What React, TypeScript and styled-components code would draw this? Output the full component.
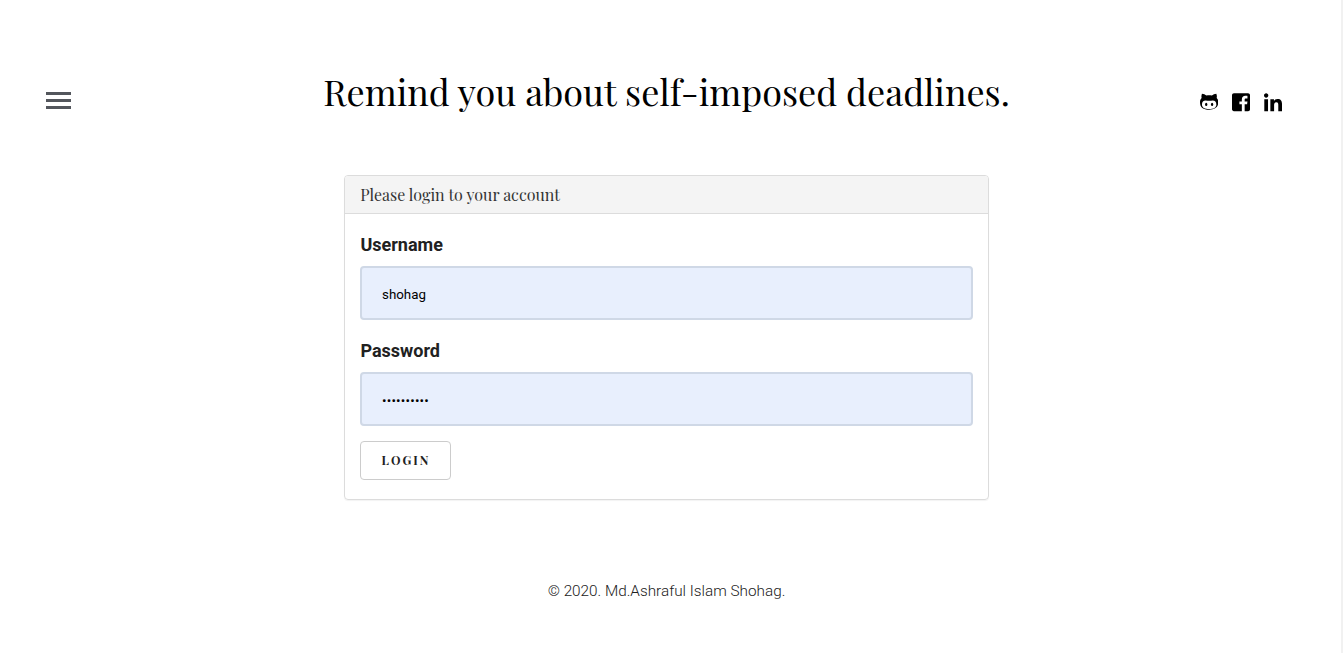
import React from "react";
import styled, { createGlobalStyle } from "styled-components";

const serif = '"Playfair Display", "Liberation Serif", serif';

const GlobalStyle = createGlobalStyle`
  *, *::before, *::after { box-sizing: border-box; }
  body {
    margin: 0;
    background: #fff;
    color: #212529;
    font-family: Roboto, "Liberation Sans", sans-serif;
    overflow: hidden;
  }
`;

const Page = styled.div`
  height: 653px;
  padding-right: 8px;
  border-right: 2px solid #f1f1f1;
  display: flex;
  flex-direction: column;
  align-items: center;
`;

const Header = styled.header`
  width: 100%;
  height: 175px;
  padding: 64px 51px 0 46px;
  display: grid;
  grid-template-columns: 105px 1fr 100px;
  align-items: start;
`;

const MenuButton = styled.button`
  width: 25px;
  height: 17px;
  margin-top: 28px;
  padding: 0;
  border: 0;
  background: none;
  display: flex;
  flex-direction: column;
  justify-content: space-between;
`;

const Bar = styled.span`
  width: 100%;
  height: 3px;
  background: #53565c;
`;

const Title = styled.h1`
  margin: 0;
  color: #000;
  font: 400 36px/54px ${serif};
  white-space: nowrap;
  text-align: center;
`;

const SocialLinks = styled.nav`
  margin-top: 28px;
  display: flex;
  justify-content: flex-end;
  gap: 14px;
`;

const SocialLink = styled.a`
  height: 21px;
  color: #000;
  display: flex;
  svg {
    height: 20.6px;
    width: auto;
  }
`;

const Card = styled.main`
  width: 645px;
  height: 325px;
  border: 1px solid #dcdcdc;
  border-radius: 4px;
  box-shadow: 0 1px 1px rgba(0, 0, 0, 0.05);
`;

const CardHeader = styled.div`
  height: 38px;
  padding: 0 15.3px;
  border-bottom: 1px solid #dcdcdc;
  border-radius: 3px 3px 0 0;
  background: #f4f4f4;
  color: #333;
  font: 400 16px/38px ${serif};
`;

const Form = styled.form`
  padding: 15px;
`;

const Field = styled.div`
  height: 106px;
`;

const Label = styled.label`
  display: block;
  height: 37px;
  padding-left: 0.4px;
  color: #212121;
  font-size: 18px;
  font-weight: 700;
  line-height: 32px;
`;

const Input = styled.input<{ $spacing: string }>`
  display: block;
  width: 100%;
  height: 54px;
  padding: 3px 20px 0;
  border: 2px solid #cfd8e6;
  border-radius: 4px;
  outline: 0;
  background: #e8effd;
  color: #000;
  font: 400 13.333px Roboto, sans-serif;
  letter-spacing: ${(p) => p.$spacing};
`;

const LoginButton = styled.button`
  width: 91px;
  height: 39px;
  padding: 0 0 0 1px;
  border: 1px solid #ccc;
  border-radius: 4px;
  background: #fff;
  color: #222;
  font: 700 12px/37px ${serif};
  letter-spacing: 2px;
  text-transform: uppercase;
`;

const Footer = styled.footer`
  margin-top: 79px;
  color: #212121;
  font-size: 15.3px;
  font-weight: 300;
  line-height: 24px;
`;

const OctocatIcon = () => (
  <svg viewBox="0 0 56 63" fill="currentColor">
    <path
      fillRule="evenodd"
      d="M6 5C11 5 16 8 20 11C25 10 31 10 36 11C40 8 45 5 50 5C52 10 52 15 51 18C55 22 56 26 56 31C56 47 46 54 28 54S0 47 0 31C0 26 1 22 5 18C4 15 4 10 6 5ZM17 26C10 26 6 31 6 38C6 48 15 52 28 52S50 48 50 38C50 31 46 26 39 26C35 26 32 27 28 27S21 26 17 26Z"
    />
    <ellipse cx="19" cy="38" rx="3.5" ry="5.2" />
    <ellipse cx="37" cy="38" rx="3.5" ry="5.2" />
  </svg>
);

const FacebookIcon = () => (
  <svg viewBox="0 0 448 512" fill="currentColor">
    <path d="M448 80v352c0 26.5-21.5 48-48 48h-85.3V302.8h60.6l8.7-67.6h-69.3V192c0-19.6 5.4-32.9 33.5-32.9H384V98.7c-6.2-.8-27.4-2.7-52.2-2.7-51.6 0-87 31.5-87 89.4v49.9H184v67.6h60.9V480H48c-26.5 0-48-21.5-48-48V80c0-26.5 21.5-48 48-48h352c26.5 0 48 21.5 48 48z" />
  </svg>
);

const LinkedInIcon = () => (
  <svg viewBox="0 0 448 512" fill="currentColor">
    <path d="M100.3 480H7.4V180.9h92.9V480zM53.8 140.1C24.1 140.1 0 115.5 0 85.8 0 56.1 24.1 32 53.8 32c29.7 0 53.8 24.1 53.8 53.8 0 29.7-24.1 54.3-53.8 54.3zM448 480h-92.7V334.4c0-34.7-.7-79.2-48.3-79.2-48.3 0-55.7 37.7-55.7 76.7V480h-92.8V180.9h89.1v40.8h1.3c12.4-23.5 42.7-48.3 87.9-48.3 94 0 111.3 61.9 111.3 142.3V480z" />
  </svg>
);

export default function App() {
  return (
    <>
      <GlobalStyle />
      <Page>
        <Header>
          <MenuButton type="button" aria-label="Menu">
            <Bar />
            <Bar />
            <Bar />
          </MenuButton>
          <Title>Remind you about self-imposed deadlines.</Title>
          <SocialLinks>
            <SocialLink aria-label="GitHub"><OctocatIcon /></SocialLink>
            <SocialLink aria-label="Facebook"><FacebookIcon /></SocialLink>
            <SocialLink aria-label="LinkedIn"><LinkedInIcon /></SocialLink>
          </SocialLinks>
        </Header>
        <Card>
          <CardHeader>Please login to your account</CardHeader>
          <Form>
            <Field>
              <Label htmlFor="username">Username</Label>
              <Input id="username" type="text" defaultValue="shohag" $spacing="0" />
            </Field>
            <Field>
              <Label htmlFor="password">Password</Label>
              <Input id="password" type="password" defaultValue="abcdefghij" $spacing="0.2px" />
            </Field>
            <LoginButton type="button">Login</LoginButton>
          </Form>
        </Card>
        <Footer>© 2020. Md.Ashraful Islam Shohag.</Footer>
      </Page>
    </>
  );
}
